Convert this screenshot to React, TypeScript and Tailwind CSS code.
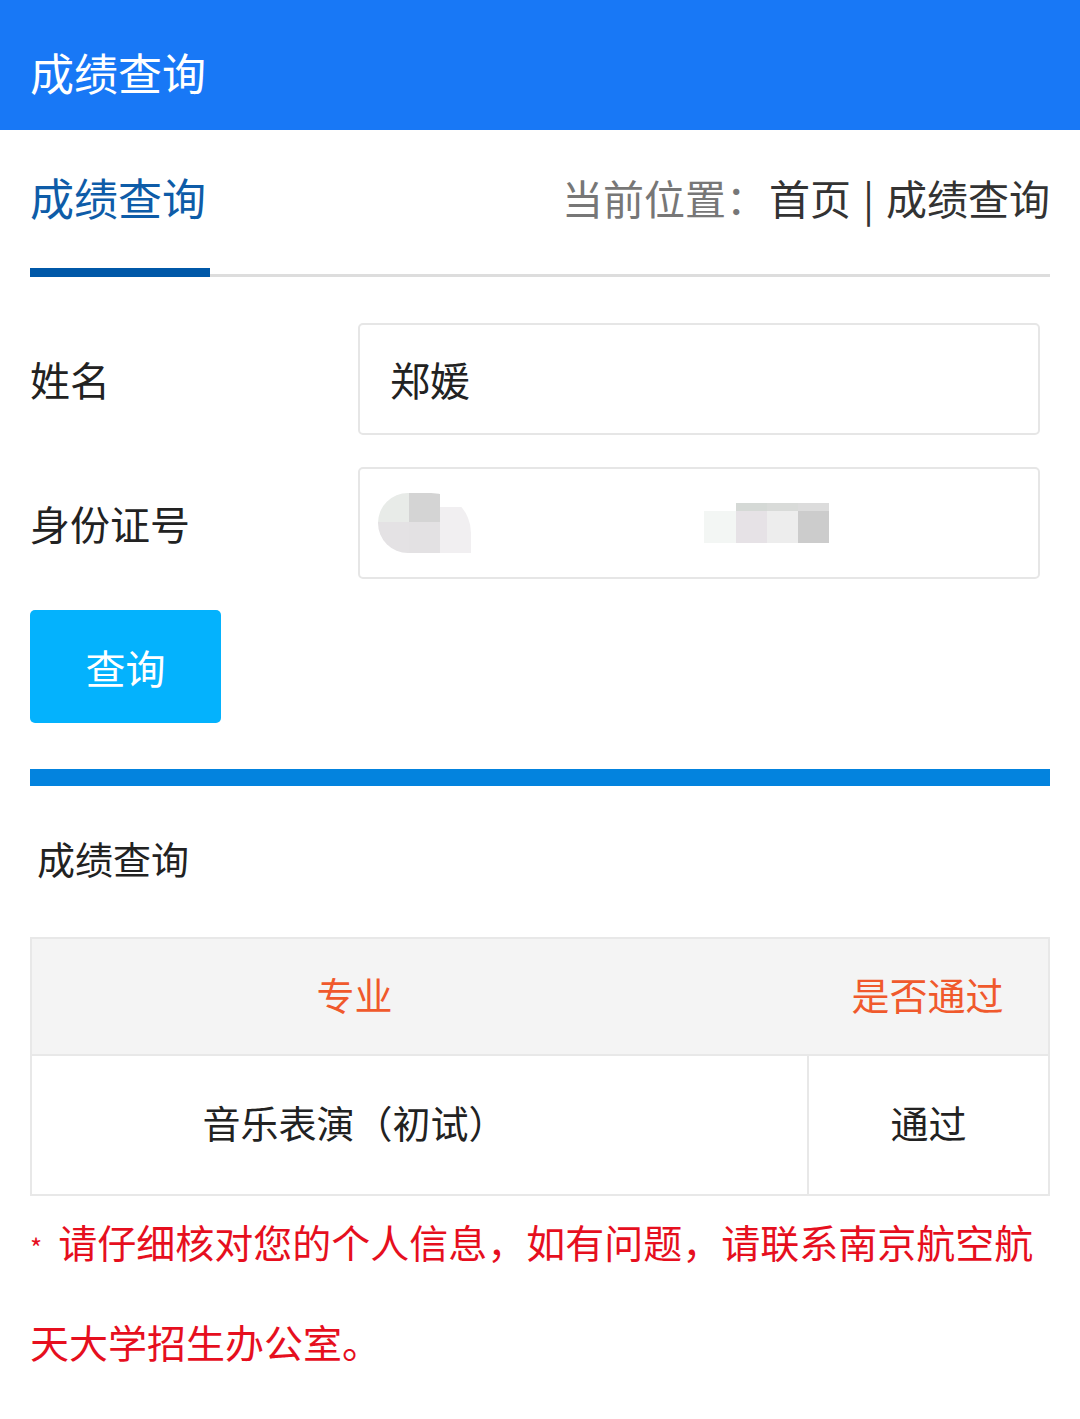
const FONT = "font-['Noto_Sans_CJK_SC','Noto_Sans',sans-serif]"

function Field({ label, children }: { label: string; children: React.ReactNode }) {
  return (
    <div className="flex items-center pr-[10px]">
      <span className="w-[328px] shrink-0 text-[40px] text-[#222]">{label}</span>
      <div className="flex h-[112px] flex-1 items-center rounded-[5px] border-2 border-[#e6e6e6] pl-[30px] pr-[10px] text-[40px] text-[#222]">
        {children}
      </div>
    </div>
  )
}

// pixelated privacy mask over the id number
function Masked() {
  return (
    <div className="flex w-full items-center">
      <div className="-ml-[12px] flex h-[60px] w-[93px] overflow-hidden rounded-tl-[30px] rounded-bl-[30px] rounded-tr-[40px]">
        <div className="flex w-[31px] flex-col">
          <div className="h-[29px] bg-[#e8ebe8]" />
          <div className="flex-1 bg-[#e4e2e4]" />
        </div>
        <div className="flex w-[31px] flex-col">
          <div className="h-[29px] bg-[#d4d4d4]" />
          <div className="flex-1 bg-[#e3e1e3]" />
        </div>
        <div className="mt-[14px] w-[31px] bg-[#f1eff1]" />
      </div>
      <div className="ml-[233px] flex h-[40px] items-stretch">
        <div className="mt-[8px] w-[32px] bg-[#f3f6f4]" />
        <div className="flex w-[31px] flex-col">
          <div className="h-[8px] bg-[#d5d9d6]" />
          <div className="flex-1 bg-[#e6e2e6]" />
        </div>
        <div className="flex w-[31px] flex-col">
          <div className="h-[8px] bg-[#d9dbd9]" />
          <div className="flex-1 bg-[#ededed]" />
        </div>
        <div className="flex w-[31px] flex-col">
          <div className="h-[8px] bg-[#dcdcdc]" />
          <div className="flex-1 bg-[#cccccc]" />
        </div>
      </div>
    </div>
  )
}

export default function App() {
  return (
    <div className={`${FONT} min-h-[1419px] w-[1080px] bg-white`}>
      <header className="flex h-[130px] items-center bg-[#1878f6] px-[30px] pt-[14px]">
        <h1 className="text-[44px] leading-none text-white">成绩查询</h1>
      </header>

      <div className="px-[30px]">
        <div className="flex h-[138px] items-center justify-between pb-[4px]">
          <span className="text-[44px] leading-none text-[#0e5ca8]">成绩查询</span>
          <span className="flex items-center text-[41px] leading-none text-[#333]">
            <span className="text-[#777]">当前位置：</span>
            <span className="ml-[2px]">首页</span>
            <span className="mx-[12px]">|</span>
            <span>成绩查询</span>
          </span>
        </div>
        <div className="flex items-end">
          <div className="h-[9px] w-[180px] bg-[#0058a8]" />
          <div className="h-[3px] flex-1 bg-[#dddddd]" />
        </div>

        <div className="mt-[46px] flex flex-col gap-[32px]">
          <Field label="姓名">郑媛</Field>
          <Field label="身份证号">
            <Masked />
          </Field>
        </div>

        <button className="mt-[31px] flex h-[113px] w-[191px] items-center justify-center rounded-[5px] bg-[#04b2fd] text-[40px] text-white">
          查询
        </button>

        <div className="mt-[46px] h-[17px] bg-[#0383de]" />

        <div className="flex h-[151px] items-center pb-[9px] pl-[7px] text-[38px] text-[#222]">
          成绩查询
        </div>

        <div className="border-2 border-[#e8e8e8] text-[38px]">
          <div className="flex h-[117px] items-center border-b-2 border-[#e8e8e8] bg-[#f4f4f4] pb-[6px] text-[#f0592c]">
            <div className="flex-1 pr-[130px] text-center">专业</div>
            <div className="w-[241px] text-center">是否通过</div>
          </div>
          <div className="flex h-[138px] items-center text-[#222]">
            <div className="flex h-full flex-1 items-center justify-center border-r-2 border-[#e8e8e8] pr-[130px] pb-[8px]">
              音乐表演（初试）
            </div>
            <div className="w-[239px] pb-[8px] text-center">通过</div>
          </div>
        </div>

        <p className="-mt-[5px] text-[39px] leading-[100px] text-[#e60f1e]">
          <span className="mr-[16px] inline-block text-[26px] leading-none">*</span>
          <span>请仔细核对您的个人信息，如有问题，请联系南京航空航天大学招生办公室。</span>
        </p>
      </div>
    </div>
  )
}
